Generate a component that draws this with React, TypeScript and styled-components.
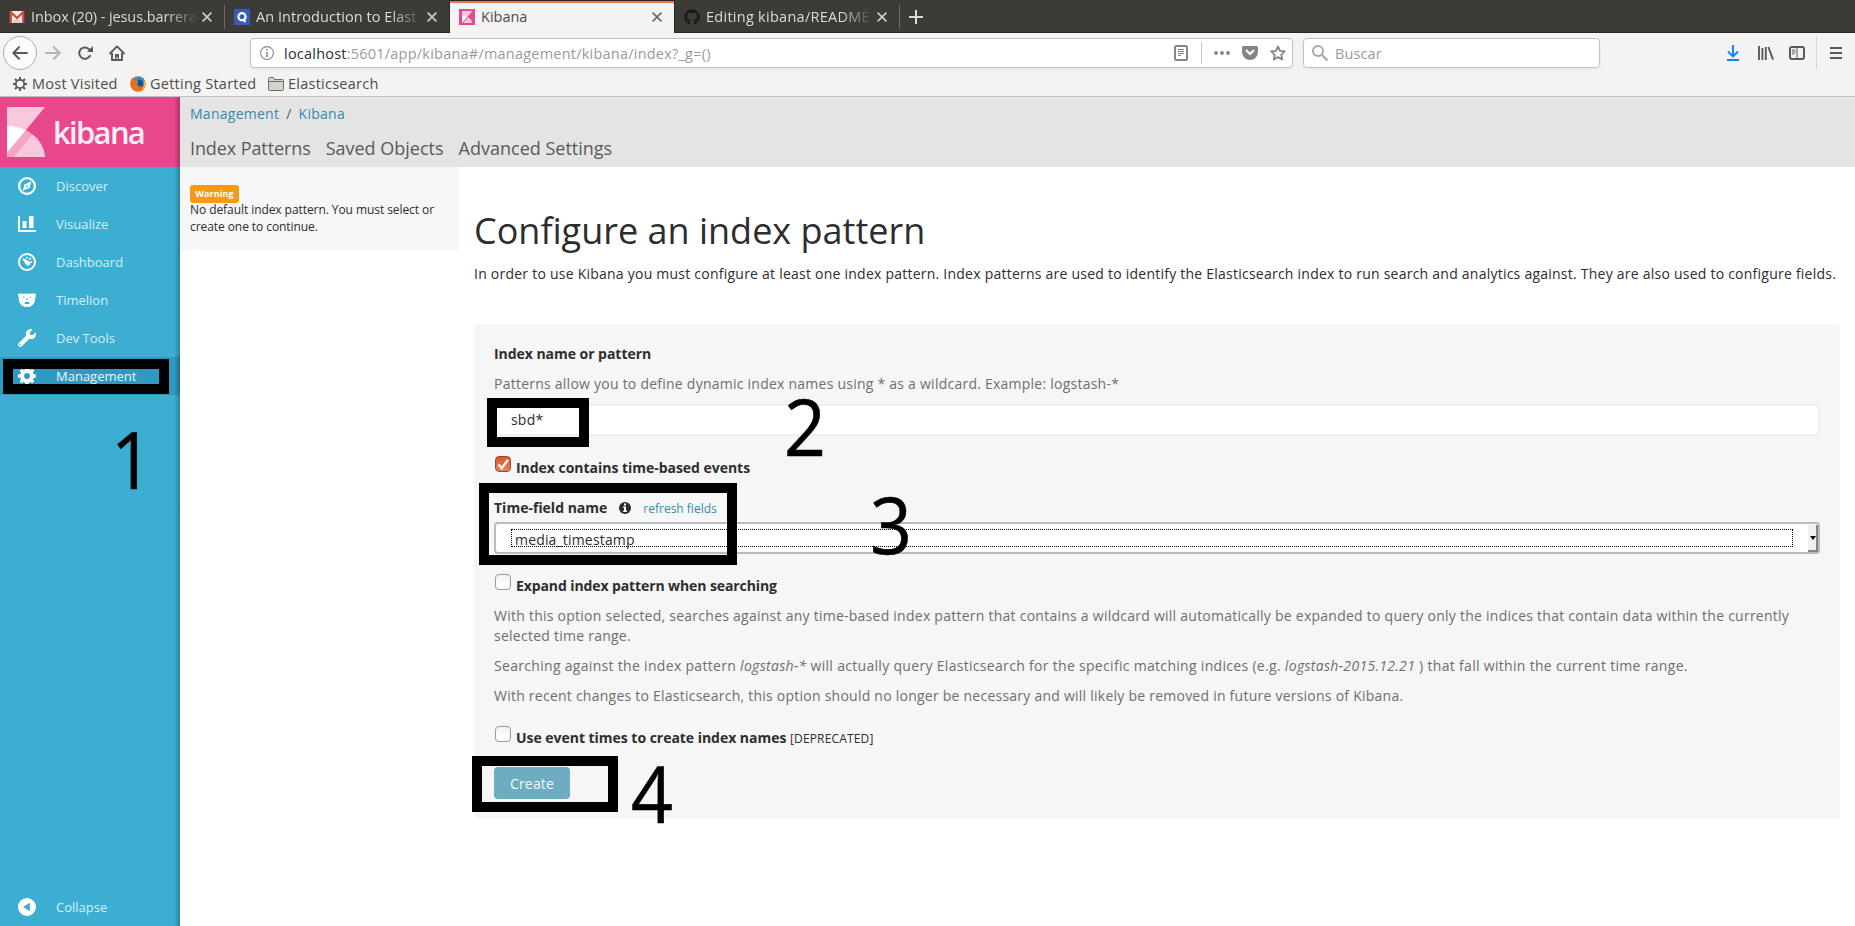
import React from 'react';
import styled, { createGlobalStyle, css } from 'styled-components';
import { FaGithub, FaWrench } from 'react-icons/fa';

const Global = createGlobalStyle`
  * { box-sizing: border-box; }
  html, body { margin: 0; padding: 0; }
  body { width: 1855px; height: 926px; overflow: hidden; background: #fff; color: #2d2d2d;
    font: 14px/20px "Open Sans", "Noto Sans", sans-serif; }
  p, h1 { margin: 0; font-weight: 400; }
  svg { display: block; flex: none; }
`;

const Screen = styled.div`
  position: relative;
  width: 1855px;
  height: 926px;
  display: flex;
  flex-direction: column;
  overflow: hidden;
`;

/* ---------- browser chrome ---------- */

const TabStrip = styled.div`
  height: 33px;
  flex: none;
  display: flex;
  background: #3c3b37;
  box-shadow: inset 0 -1px 0 #282724;
`;

const Tab = styled.div<{ $active?: boolean; $line?: boolean }>`
  position: relative;
  width: 225px;
  height: 33px;
  display: flex;
  align-items: center;
  padding: 0 13px 0 9px;
  color: #dfdbd2;
  ${(p) =>
    p.$active &&
    css`
      width: 226px;
      margin-left: -1px;
      padding-right: 12px;
      color: #4c4c4c;
      background: #f4f3f1;
      border: solid #282724;
      border-width: 1px 1px 0;
      box-shadow: inset 0 2px 0 #f0774a;
    `}
  ${(p) =>
    p.$line &&
    css`
      &::after {
        content: '';
        position: absolute;
        right: 0;
        top: 5px;
        width: 1px;
        height: 24px;
        background: #6c6b67;
      }
    `}
`;

const TabTitle = styled.span<{ $gap: number; $ls?: number; $fade?: boolean }>`
  flex: 1;
  min-width: 0;
  margin-left: ${(p) => p.$gap}px;
  margin-right: 4px;
  overflow: hidden;
  white-space: nowrap;
  font-size: 14.5px;
  letter-spacing: ${(p) => p.$ls ?? 0}px;
  ${(p) => p.$fade && css`mask-image: linear-gradient(to right, #000 calc(100% - 32px), transparent);`}
`;

const NavBar = styled.div`
  height: 39px;
  flex: none;
  display: flex;
  align-items: center;
  padding: 2px 10px 2px 3px;
  background: #f4f3f1;
`;

const BackButton = styled.div`
  width: 34px;
  height: 34px;
  border: 1px solid #b0aeab;
  border-radius: 50%;
  background: #fbfbfa;
  display: flex;
  align-items: center;
  justify-content: center;
`;

const NavIcon = styled.div<{ $ml: number }>`
  margin-left: ${(p) => p.$ml}px;
`;

const Field = styled.div<{ $w: number; $ml: number }>`
  width: ${(p) => p.$w}px;
  height: 30px;
  margin-left: ${(p) => p.$ml}px;
  display: flex;
  align-items: center;
  background: #fff;
  border: 1px solid #c5c0bb;
  border-radius: 4px;
  box-shadow: 0 1px 3px rgba(0, 0, 0, 0.06);
  font-size: 14.5px;
  color: #9a9a9a;
`;

const UrlText = styled.span`
  flex: 1;
  margin: 2px 0 0 10px;
  white-space: nowrap;
  letter-spacing: 0.22px;
  b { font-weight: 400; color: #2e2e2e; }
`;

const Placeholder = styled.span`
  margin: 2px 0 0 7px;
  letter-spacing: 0.1px;
`;

const VLine = styled.i<{ $h: number; $m: string; $c: string }>`
  width: 1px;
  height: ${(p) => p.$h}px;
  margin: ${(p) => p.$m};
  background: ${(p) => p.$c};
`;

const Bookmarks = styled.div`
  height: 25px;
  flex: none;
  display: flex;
  align-items: center;
  padding: 0 0 1px 12px;
  background: #f4f3f1;
  border-bottom: 1px solid #c5c0bb;
  color: #4c4c4c;
`;

const Bookmark = styled.span<{ $w: number; $gap: number }>`
  width: ${(p) => p.$w}px;
  display: flex;
  align-items: center;
  gap: ${(p) => p.$gap}px;
  white-space: nowrap;
  font-size: 14.5px;
  letter-spacing: 0.25px;
`;

/* ---------- application ---------- */

const Page = styled.div`
  flex: 1;
  display: flex;
  min-height: 0;
`;

const Sidebar = styled.nav`
  position: relative;
  width: 180px;
  flex: none;
  display: flex;
  flex-direction: column;
  background: #3caed2;
  &::after {
    content: '';
    position: absolute;
    inset: 0 0 0 auto;
    width: 6px;
    background: linear-gradient(to right, rgba(0, 0, 0, 0), rgba(0, 0, 0, 0.27));
  }
`;

const Brand = styled.div`
  height: 70px;
  flex: none;
  display: flex;
  padding: 10px 7px;
  background: #e8488b;
`;

const BrandName = styled.span`
  margin: 4px 0 0 8px;
  font-size: 31px;
  line-height: 42px;
  height: 42px;
  font-weight: 600;
  letter-spacing: -1.7px;
  color: #fdeef5;
`;

const NavItem = styled.div<{ $active?: boolean; $bottom?: boolean }>`
  height: 38px;
  flex: none;
  display: flex;
  align-items: center;
  gap: 20px;
  padding-left: 18px;
  font-size: 13px;
  color: ${(p) => (p.$active ? '#eaf5fa' : '#d6eef7')};
  background: ${(p) => (p.$active ? '#2f99c1' : 'transparent')};
  margin-top: ${(p) => (p.$bottom ? 'auto' : '0')};
  svg { color: #fff; }
`;

const Content = styled.div`
  flex: 1;
  display: flex;
  flex-direction: column;
`;

const TopBar = styled.header`
  height: 70px;
  background: #e4e4e4;
  padding: 7px 10px 0;
`;

const Crumbs = styled.div`
  display: flex;
  gap: 7px;
  letter-spacing: 0.26px;
  color: #5a5a5a;
  a { color: #328caa; }
`;

const SubNav = styled.div`
  display: flex;
  gap: 15px;
  margin-top: 11px;
  font-size: 18px;
  line-height: 26px;
  color: #5a5a5a;
  span:first-child { letter-spacing: -0.1px; }
`;

const Columns = styled.div`
  display: flex;
  align-items: flex-start;
`;

const Notice = styled.aside`
  width: 279px;
  height: 83px;
  flex: none;
  padding: 18px 10px 0;
  background: #f6f6f6;
  font-size: 12px;
  line-height: 17px;
  letter-spacing: -0.07px;
`;

const Badge = styled.div`
  width: 49px;
  height: 18px;
  border-radius: 3px;
  background: #f39c12;
  color: #fff;
  font-size: 9px;
  font-weight: 700;
  line-height: 18px;
  letter-spacing: 0.1px;
  text-align: center;
  margin-bottom: -2px;
`;

const Main = styled.main`
  width: 1396px;
  padding: 42px 15px 0;
`;

const Title = styled.h1`
  font-size: 36px;
  line-height: 44px;
  margin-bottom: 11px;
`;

const Intro = styled.p`
  white-space: nowrap;
  letter-spacing: 0.235px;
`;

const Panel = styled.section`
  width: 1366px;
  height: 495px;
  margin-top: 40px;
  padding: 20px 20px 0;
  border-radius: 4px;
  background: #f6f6f6;
  display: flex;
  flex-direction: column;
`;

const Label = styled.div`
  font-weight: 700;
  height: 20px;
  letter-spacing: -0.04px;
`;

const Help = styled.p<{ $ls?: number }>`
  margin-top: 10px;
  color: #6e6e6e;
  letter-spacing: ${(p) => p.$ls ?? 0.24}px;
`;

const TextInput = styled.div`
  height: 32px;
  margin-top: 10px;
  padding: 4px 15px;
  border: 2px solid #ecf0f1;
  border-radius: 4px;
  background: #fff;
  letter-spacing: 0.2px;
`;

const CheckRow = styled.div<{ $mt: number; $ls?: number }>`
  display: flex;
  height: 22px;
  margin: ${(p) => p.$mt}px 0 0 1px;
  gap: 5px;
  font-weight: 700;
  letter-spacing: ${(p) => p.$ls ?? -0.03}px;
  span { padding-top: 2px; }
  small { font-size: 12px; font-weight: 400; letter-spacing: 0.16px; }
`;

const Box = styled.i<{ $on?: boolean }>`
  width: 16px;
  height: 16px;
  flex: none;
  border-radius: 4px;
  border: 1px solid ${(p) => (p.$on ? '#9a4a2c' : '#9b9b9b')};
  background: ${(p) => (p.$on ? 'linear-gradient(#d9592a, #e5835b)' : 'linear-gradient(#f2f2f2, #fff)')};
`;

const FieldHead = styled.div`
  display: flex;
  align-items: center;
  height: 20px;
  margin-top: 20px;
  font-weight: 700;
  svg { margin: 0 12px; }
  a { font-size: 12px; font-weight: 400; color: #328caa; padding-top: 2px; }
`;

const Select = styled.div`
  display: flex;
  justify-content: space-between;
  height: 32px;
  margin-top: 4px;
  padding-left: 15px;
  border: 2px solid #b4bcc2;
  border-radius: 4px;
  background: #fff;
`;

const FocusArea = styled.div`
  width: 1282px;
  height: 18px;
  margin-top: 5px;
  padding-left: 3px;
  border: 1px dotted #000;
  line-height: 20px;
  letter-spacing: 0.17px;
`;

const Spin = styled.div`
  width: 10px;
  height: 27px;
  margin-top: 1px;
  display: flex;
  align-items: center;
  justify-content: flex-end;
  background: #f0f0ef;
  border-right: 2px solid #858585;
  border-bottom: 2px solid #858585;
`;

const CreateButton = styled.div`
  width: 76px;
  height: 32px;
  margin-top: 19px;
  border-radius: 4px;
  background: #6eadc1;
  color: #f3f9fb;
  line-height: 33px;
  text-align: center;
  letter-spacing: 0.2px;
`;

/* Annotations drawn over the page */
const Frame = styled.div<{ $x: number; $y: number; $w: number; $h: number }>`
  position: absolute;
  left: ${(p) => p.$x}px;
  top: ${(p) => p.$y}px;
  width: ${(p) => p.$w}px;
  height: ${(p) => p.$h}px;
  border: 10px solid #000;
`;

const Step = styled.div<{ $x: number; $y: number }>`
  position: absolute;
  left: ${(p) => p.$x - 30}px;
  top: ${(p) => p.$y}px;
  width: 60px;
  text-align: center;
  font-size: 78px;
  line-height: 80px;
  color: #000;
  transform: scaleX(0.94);
  -webkit-text-stroke: 0.6px #000;
`;

/* ---------- icons ---------- */

const Close = ({ color = '#cfccc5' }: { color?: string }) => (
  <svg width="10" height="10" viewBox="0 0 10 10" stroke={color} strokeWidth="1.7">
    <path d="M.6.6l8.800 8.800M9.400.6L.6 9.400" />
  </svg>
);

const KMark = ({ w, h }: { w: number; h: number }) => (
  <svg width={w} height={h} viewBox="0 0 38 50" preserveAspectRatio="none">
    <path fill="#f8c8dd" d="M0 0h38L0 46z" />
    <path fill="#fff" d="M0 19c7 0 13 1.500 19 4.200L0 46z" />
    <path fill="#f4a6c6" d="M19 23.200c2.200 1 4.300 2.300 6.300 4L6.500 50H0v-4z" />
    <path fill="#f8c8dd" d="M25.300 27.200C33 33 37.500 41 38 50H6.500z" />
  </svg>
);

const KFavicon = () => (
  <svg width="16" height="16" viewBox="0 0 16 16">
    <path fill="#e8488b" d="M0 0h16v16H0z" />
    <path fill="#f8c8dd" d="M3 2h10.500L3 14z" />
    <path fill="#fff" d="M3 6.500c2 0 3.600.4 5 1.200L3 13.600z" />
    <path fill="#f8c8dd" d="M9 8.300c2.700 1.500 4 3.400 4.300 5.700H4z" />
  </svg>
);

const Gmail = () => (
  <svg width="16" height="12" viewBox="0 0 16 12">
    <path fill="#f1efec" d="M1 0h14v12H1z" />
    <path fill="#cfcfcf" d="M3 12l5-5 5 5z" />
    <path fill="none" stroke="#d54b3d" strokeWidth="2.300" d="M1.800 12V1.200L8 7l6.200-5.800V12" />
  </svg>
);

const QIcon = () => (
  <svg width="16" height="16" viewBox="0 0 16 16">
    <path fill="#3a5ab8" d="M0 0h16v16H0z" />
    <circle cx="8" cy="7.800" r="3.600" fill="none" stroke="#fff" strokeWidth="2.200" />
    <path stroke="#fff" strokeWidth="2" d="M9 10l2.500 3" />
  </svg>
);

const Firefox = () => (
  <svg width="16" height="16" viewBox="0 0 16 16">
    <circle cx="8" cy="8" r="7.800" fill="#e8701a" />
    <circle cx="9" cy="5.800" r="5.400" fill="#2f8fd0" />
    <path fill="#1b4f91" d="M8 4c3-1 5 1 5 4s-2 4-5 3z" />
    <path fill="#e8701a" d="M.4 7C.6 4.500 1.500 2.500 3 1.500c0 1.500 1 2.500 2.800 2.800L8 6 6 8c.5 2 3.500 3 5.500 1.500C11 13 4 14 2 10z" />
    <path fill="#f9c12d" d="M13.500 3.500c3 4 2.200 9-2 11.300C14 11 14.500 7 13.500 3.500z" />
  </svg>
);

const stroke = { fill: 'none', stroke: 'currentColor' } as const;

const Compass = () => (
  <svg width="18" height="18" viewBox="0 0 18 18">
    <circle cx="9" cy="9" r="7.900" {...stroke} strokeWidth="2.200" />
    <path fill="currentColor" fillRule="evenodd" d="M13.300 4.300l-1.700 6.500-6.900 3 1.700-6.400zM8 8.200v2.300l2.200-1.300z" />
  </svg>
);

const Bars = () => (
  <svg width="18" height="16" viewBox="0 0 18 16" fill="currentColor">
    <path d="M0 0h2v14h16v2H0zM4.500 5h4v7h-4zM11 0h4.500v12H11z" />
  </svg>
);

const Gauge = () => (
  <svg width="18" height="18" viewBox="0 0 18 18">
    <circle cx="9" cy="9" r="8" {...stroke} strokeWidth="2" />
    <g fill="currentColor">
      <path d="M4.500 6.200l1-1 5.300 3a2.300 2.300 0 1 1-2.600 3.600z" />
      <circle cx="8.800" cy="4.700" r="1" />
      <circle cx="12" cy="5.800" r="1.100" />
      <circle cx="13.200" cy="9" r="1" />
    </g>
  </svg>
);

const Bear = () => (
  <svg width="18" height="14" viewBox="0 0 18 14">
    <path fill="currentColor" d="M0 1.200C1 .5 4 .4 5.500 1 7.500.4 10.500.4 12.500 1 14 .4 17 .5 18 1.200l-.8 4c.3 5-3.200 8.800-8.200 8.800S.5 10.200.8 5.200z" />
    <path fill="#3caed2" d="M4.800 3.700h1.400v1H4.800zM11.800 3.700h1.400v1h-1.400zM7.500 5.500h3L9 7zM7.300 9.200c.8-.8 2.600-.8 3.400 0l1 1.800H6.300z" />
  </svg>
);

const TEETH = [0, 45, 90, 135];

const Gear = () => (
  <svg width="18" height="18" viewBox="0 0 18 18">
    <circle cx="9" cy="9" r="4.900" {...stroke} strokeWidth="4" />
    <g fill="currentColor">
      {TEETH.map((a) => (
        <path key={a} transform={`rotate(${a} 9 9)`} d="M7.600 0h2.800l.5 3.500H7.100zM7.600 18h2.800l.5-3.500H7.100z" />
      ))}
    </g>
  </svg>
);

const Collapse = () => (
  <svg width="18" height="18" viewBox="0 0 18 18">
    <circle cx="9" cy="9" r="9" fill="currentColor" />
    <path fill="#3caed2" d="M11.800 4.800v8.400L5 9z" />
  </svg>
);

const Info = () => (
  <svg width="12" height="12" viewBox="0 0 12 12">
    <circle cx="6" cy="6" r="6" fill="#2d2d2d" />
    <path fill="#fff" d="M5 1.600h2v1.800H5zM4.200 4.600H7v4h.9V10H4.200V8.600H5V5.900h-.8z" />
  </svg>
);

const Check = () => (
  <svg width="14" height="14" viewBox="0 0 14 14">
    <path d="M2.500 7.500l3.300 3.700L12 2.800" fill="none" stroke="#fff" strokeWidth="2.300" />
  </svg>
);

export default function App() {
  return (
    <Screen>
      <Global />
      <TabStrip>
        <Tab $line>
          <Gmail />
          <TabTitle $gap={6} $ls={-0.1} $fade>Inbox (20) - jesus.barrera</TabTitle>
          <Close />
        </Tab>
        <Tab>
          <QIcon />
          <TabTitle $gap={6} $ls={0.06} $fade>An Introduction to Elast</TabTitle>
          <Close />
        </Tab>
        <Tab $active>
          <KFavicon />
          <TabTitle $gap={6}>Kibana</TabTitle>
          <Close color="#6b6a68" />
        </Tab>
        <Tab $line>
          <FaGithub size={16} color="#1b1b1b" />
          <TabTitle $gap={6} $ls={0.27} $fade>Editing kibana/README</TabTitle>
          <Close />
        </Tab>
        <Tab>
          <svg width="14" height="14" viewBox="0 0 14 14" stroke="#dfdbd2" strokeWidth="2">
            <path d="M7 0v14M0 7h14" />
          </svg>
        </Tab>
      </TabStrip>

      <NavBar>
        <BackButton>
          <svg width="16" height="14" viewBox="0 0 16 14" fill="none" stroke="#5b5a58" strokeWidth="2" strokeLinecap="round">
            <path d="M15 7H1.500M7 1.200L1.300 7 7 12.800" />
          </svg>
        </BackButton>
        <NavIcon $ml={8}>
          <svg width="16" height="14" viewBox="0 0 16 14" fill="none" stroke="#b5b4b2" strokeWidth="2" strokeLinecap="round">
            <path d="M1 7h13.500M9 1.200L14.700 7 9 12.800" />
          </svg>
        </NavIcon>
        <NavIcon $ml={17}>
          <svg width="15" height="14" viewBox="0 0 15 14">
            <path d="M12 9.800a5.700 5.700 0 1 1-.6-6.300" fill="none" stroke="#5b5a58" strokeWidth="2" strokeLinecap="round" />
            <path d="M15 0v6H9z" fill="#5b5a58" />
          </svg>
        </NavIcon>
        <NavIcon $ml={16}>
          <svg width="16" height="16" viewBox="0 0 16 16">
            <path d="M1 8.400L8 1.400l7 7M3 8.500V15h10V8.500" fill="none" stroke="#5b5a58" strokeWidth="2" strokeLinecap="round" strokeLinejoin="round" />
            <path d="M6 9h4v6H8.700v-3H7.400v3H6z" fill="#5b5a58" />
          </svg>
        </NavIcon>
        <Field $w={1043} $ml={125}>
          <NavIcon $ml={9}>
            <svg width="14" height="14" viewBox="0 0 14 14">
              <circle cx="7" cy="7" r="6.400" fill="none" stroke="#8a8a8a" strokeWidth="1.100" />
              <path d="M6.200 3h1.600v1.600H6.200zM6.200 6h1.600v5H6.200z" fill="#8a8a8a" />
            </svg>
          </NavIcon>
          <UrlText><b>localhost</b>:5601/app/kibana#/management/kibana/index?_g=()</UrlText>
          <svg width="14" height="16" viewBox="0 0 14 16">
            <rect x="1" y="1" width="12" height="14" rx="1.500" fill="none" stroke="#858585" strokeWidth="2" />
            <path d="M4 4.500h6M4 6.500h6M4 8.500h6M4 10.500h3" stroke="#858585" />
          </svg>
          <VLine $h={22} $m="0 12px 0 13px" $c="#c5c5c5" />
          <svg width="16" height="4" viewBox="0 0 16 4" fill="#858585">
            <circle cx="2" cy="2" r="1.900" /><circle cx="8" cy="2" r="1.900" /><circle cx="14" cy="2" r="1.900" />
          </svg>
          <NavIcon $ml={12}>
            <svg width="16" height="14" viewBox="0 0 16 14">
              <path d="M1.500 0h13A1.500 1.500 0 0 1 16 1.500V6A8 8 0 0 1 0 6V1.500A1.500 1.500 0 0 1 1.500 0z" fill="#858585" />
              <path d="M4.500 4.500L8 8l3.500-3.500" fill="none" stroke="#fff" strokeWidth="2" strokeLinecap="round" />
            </svg>
          </NavIcon>
          <NavIcon $ml={12}>
            <svg width="16" height="16" viewBox="0 0 16 16">
              <path d="M8 1.500l2 4.300 4.800.6-3.500 3.200.9 4.900L8 12.100l-4.200 2.400.9-4.900L1.200 6.400 6 5.800z" fill="none" stroke="#858585" strokeWidth="1.800" strokeLinejoin="round" />
            </svg>
          </NavIcon>
          <NavIcon $ml={6} />
        </Field>
        <Field $w={297} $ml={10}>
          <NavIcon $ml={8}>
            <svg width="16" height="16" viewBox="0 0 16 16" fill="none" stroke="#a9a9a9">
              <circle cx="6" cy="6" r="5" strokeWidth="2" /><path d="M9.800 9.800L15.500 15.500" strokeWidth="2.300" />
            </svg>
          </NavIcon>
          <Placeholder>Buscar</Placeholder>
        </Field>
        <NavIcon $ml={127}>
          <svg width="12" height="16" viewBox="0 0 12 16" fill="none" stroke="#0a84ff" strokeWidth="1.900">
            <path d="M6 0v11M1 6.500l5 5 5-5M0 15h12" />
          </svg>
        </NavIcon>
        <NavIcon $ml={19}>
          <svg width="16" height="14" viewBox="0 0 16 14" fill="none" stroke="#5b5a58" strokeWidth="1.900">
            <path d="M1 0v14M4.400 2v12M7.800 1v13M10.400 1L15 13.600" />
          </svg>
        </NavIcon>
        <NavIcon $ml={15}>
          <svg width="16" height="14" viewBox="0 0 16 14" fill="none" stroke="#5b5a58">
            <rect x="1" y="1" width="14" height="12" rx="2" strokeWidth="2" /><path d="M8 1v12M3 4h3.500M3 6h3.500M3 8h2.500" />
          </svg>
        </NavIcon>
        <VLine $h={34} $m="0 13px 0 11px" $c="#d9d7d4" />
        <svg width="12" height="12" viewBox="0 0 12 12" stroke="#5b5a58" strokeWidth="2">
          <path d="M0 1h12M0 6h12M0 11h12" />
        </svg>
      </NavBar>

      <Bookmarks>
        <Bookmark $w={118} $gap={4}>
          <svg width="16" height="16" viewBox="0 0 16 16" fill="none" stroke="#5b5a58">
            <circle cx="8" cy="8" r="4.200" strokeWidth="1.800" />
            <path strokeWidth="2" d="M8 1v2.500M8 12.500V15M1 8h2.500M12.500 8H15M3 3l1.800 1.800M11.200 11.200L13 13M3 13l1.800-1.800M11.200 4.800L13 3" />
          </svg>
          Most Visited
        </Bookmark>
        <Bookmark $w={138} $gap={4}><Firefox />Getting Started</Bookmark>
        <Bookmark $w={130} $gap={4}>
          <svg width="16" height="14" viewBox="0 0 16 14">
            <path d="M.5 13V1.500a1 1 0 0 1 1-1h4l1 2h8a1 1 0 0 1 1 1v9a1 1 0 0 1-1 1h-13z" fill="#d3d2ce" stroke="#6e6d6a" />
            <path d="M1 4.500h14" stroke="#6e6d6a" />
          </svg>
          Elasticsearch
        </Bookmark>
      </Bookmarks>

      <Page>
        <Sidebar>
          <Brand>
            <KMark w={38} h={50} />
            <BrandName>kibana</BrandName>
          </Brand>
          <NavItem><Compass />Discover</NavItem>
          <NavItem><Bars />Visualize</NavItem>
          <NavItem><Gauge />Dashboard</NavItem>
          <NavItem><Bear />Timelion</NavItem>
          <NavItem><FaWrench size={18} />Dev Tools</NavItem>
          <NavItem $active><Gear />Management</NavItem>
          <NavItem $bottom><Collapse />Collapse</NavItem>
        </Sidebar>

        <Content>
          <TopBar>
            <Crumbs><a>Management</a><span>/</span><a>Kibana</a></Crumbs>
            <SubNav><span>Index Patterns</span><span>Saved Objects</span><span>Advanced Settings</span></SubNav>
          </TopBar>
          <Columns>
            <Notice>
              <Badge>Warning</Badge>
              No default index pattern. You must select or create one to continue.
            </Notice>
            <Main>
              <Title>Configure an index pattern</Title>
              <Intro>
                In order to use Kibana you must configure at least one index pattern. Index patterns are used to identify the Elasticsearch index to run search and analytics against. They are also used to configure fields.
              </Intro>
              <Panel>
                <Label>Index name or pattern</Label>
                <Help>Patterns allow you to define dynamic index names using * as a wildcard. Example: logstash-*</Help>
                <TextInput>sbd*</TextInput>
                <CheckRow $mt={20}>
                  <Box $on><Check /></Box>
                  <span>Index contains time-based events</span>
                </CheckRow>
                <FieldHead>Time-field name<Info /><a>refresh fields</a></FieldHead>
                <Select>
                  <FocusArea>media_timestamp</FocusArea>
                  <Spin>
                    <svg width="6" height="4" viewBox="0 0 6 4"><path d="M0 0h6L3 4z" /></svg>
                  </Spin>
                </Select>
                <CheckRow $mt={20} $ls={-0.1}>
                  <Box />
                  <span>Expand index pattern when searching</span>
                </CheckRow>
                <Help $ls={0.25}>
                  With this option selected, searches against any time-based index pattern that contains a wildcard will automatically be expanded to query only the indices that contain data within the currently selected time range.
                </Help>
                <Help $ls={0.308}>
                  Searching against the index pattern <em>logstash-*</em> will actually query Elasticsearch for the specific matching indices (e.g. <em>logstash-2015.12.21</em> ) that fall within the current time range.
                </Help>
                <Help>
                  With recent changes to Elasticsearch, this option should no longer be necessary and will likely be removed in future versions of Kibana.
                </Help>
                <CheckRow $mt={20}>
                  <Box />
                  <span>Use event times to create index names <small>[DEPRECATED]</small></span>
                </CheckRow>
                <CreateButton>Create</CreateButton>
              </Panel>
            </Main>
          </Columns>
        </Content>
      </Page>

      <Frame $x={3} $y={359} $w={166} $h={35} />
      <Frame $x={487} $y={398} $w={102} $h={49} />
      <Frame $x={479} $y={483} $w={258} $h={82} />
      <Frame $x={472} $y={756} $w={146} $h={56} />
      <Step $x={132} $y={419}>1</Step>
      <Step $x={805} $y={386}>2</Step>
      <Step $x={891} $y={484}>3</Step>
      <Step $x={652} $y={753}>4</Step>
    </Screen>
  );
}
